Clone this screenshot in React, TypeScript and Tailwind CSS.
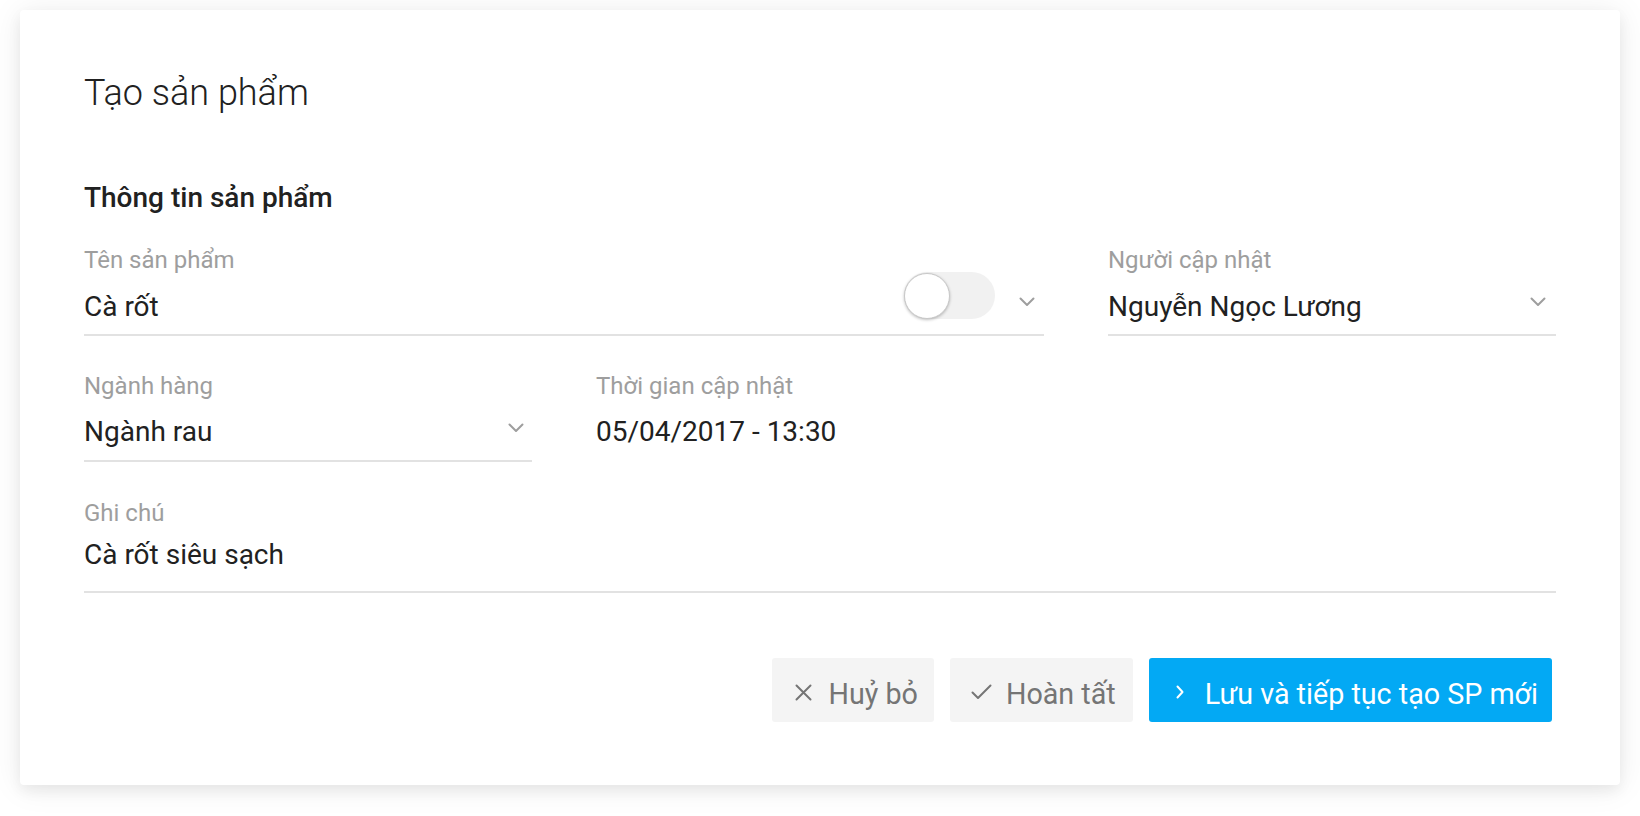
import React from 'react';

const ChevronDown = () => (
  <svg width="16" height="10" viewBox="0 0 16 10" fill="none" className="shrink-0">
    <polyline points="1.5,1.5 8,8 14.5,1.5" stroke="#9e9e9e" strokeWidth="2" strokeLinecap="round" strokeLinejoin="round" />
  </svg>
);

const Toggle = () => (
  <div className="relative w-[91px] h-[47px] rounded-full bg-[#f1f1f1] shrink-0">
    <div className="absolute left-0 top-[1px] w-[46px] h-[46px] rounded-full bg-white border border-[#c8c8c8] shadow-[0_1px_3px_rgba(0,0,0,0.25)]" />
  </div>
);

const Label: React.FC<{ children: React.ReactNode }> = ({ children }) => (
  <div className="text-[24px] leading-[28px] text-[#9e9e9e]">{children}</div>
);

export default function App() {
  return (
    <div className="min-h-screen bg-white pt-[10px] px-[20px] font-['Roboto',sans-serif]">
      <div className="h-[775px] rounded-[4px] bg-white shadow-[0_6px_14px_rgba(0,0,0,0.06),0_2px_32px_rgba(0,0,0,0.08)] px-[64px] pt-[61px]">
        <h1 className="text-[36px] leading-[44px] font-light text-[#212121]">Tạo sản phẩm</h1>

        <h2 className="mt-[66px] text-[28px] leading-[34px] font-medium text-[#212121]">Thông tin sản phẩm</h2>

        <div className="mt-[31px] grid grid-cols-3 gap-x-16 gap-y-[36px]">
          {/* Tên sản phẩm */}
          <div className="col-span-2">
            <Label>Tên sản phẩm</Label>
            <div className="flex items-start pt-[15px] pb-[9px] border-b-2 border-[#e2e2e2]">
              <span className="flex-1 text-[28px] leading-[36px] text-[#212121]">Cà rốt</span>
              <div className="-mt-[17px]">
                <Toggle />
              </div>
              <div className="mt-[8px] ml-[24px] mr-[9px]">
                <ChevronDown />
              </div>
            </div>
          </div>

          {/* Người cập nhật */}
          <div>
            <Label>Người cập nhật</Label>
            <div className="flex items-start pt-[15px] pb-[9px] border-b-2 border-[#e2e2e2]">
              <span className="flex-1 text-[28px] leading-[36px] text-[#212121]">Nguyễn Ngọc Lương</span>
              <div className="mt-[8px] mr-[10px]">
                <ChevronDown />
              </div>
            </div>
          </div>

          {/* Ngành hàng */}
          <div>
            <Label>Ngành hàng</Label>
            <div className="flex items-start pt-[14px] pb-[10px] border-b-2 border-[#e2e2e2]">
              <span className="flex-1 text-[28px] leading-[36px] text-[#212121]">Ngành rau</span>
              <div className="mt-[9px] mr-[8px]">
                <ChevronDown />
              </div>
            </div>
          </div>

          {/* Thời gian cập nhật */}
          <div>
            <Label>Thời gian cập nhật</Label>
            <div className="pt-[14px] text-[28px] leading-[36px] text-[#212121]">05/04/2017 - 13:30</div>
          </div>
          <div />

          {/* Ghi chú */}
          <div className="col-span-3 mt-[1px]">
            <Label>Ghi chú</Label>
            <div className="pt-[10px] pb-[18px] border-b-2 border-[#e2e2e2]">
              <span className="text-[28px] leading-[36px] text-[#212121]">Cà rốt siêu sạch</span>
            </div>
          </div>
        </div>

        <div className="mt-[65px] mr-[4px] flex justify-end gap-4">
          <button className="h-[64px] flex items-center gap-4 pl-[23px] pr-[16px] rounded-[3px] bg-[#f4f4f4] text-[28.7px] text-[#757575]">
            <svg width="17" height="17" viewBox="0 0 17 17" fill="none" className="mt-[4px]">
              <path d="M1.5 1.5L15.5 15.5M15.5 1.5L1.5 15.5" stroke="#757575" strokeWidth="2" strokeLinecap="round" />
            </svg>
            <span className="pt-[9px]">Huỷ bỏ</span>
          </button>
          <button className="h-[64px] flex items-center gap-[14px] pl-[21px] pr-[17px] rounded-[3px] bg-[#f4f4f4] text-[28.7px] text-[#757575]">
            <svg width="21" height="16" viewBox="0 0 21 16" fill="none" className="mt-[4px]">
              <path d="M1.5 8.5L7 14L19.5 1.5" stroke="#757575" strokeWidth="2" strokeLinecap="round" strokeLinejoin="round" />
            </svg>
            <span className="pt-[9px]">Hoàn tất</span>
          </button>
          <button className="h-[64px] flex items-center gap-[21px] pl-[27px] pr-[14px] rounded-[3px] bg-[#03a9f4] text-[28.7px] text-white">
            <svg width="8" height="14" viewBox="0 0 8 14" fill="none" className="mt-[4px]">
              <path d="M1.5 1.5L6.5 7L1.5 12.5" stroke="#ffffff" strokeWidth="2" strokeLinecap="round" strokeLinejoin="round" />
            </svg>
            <span className="pt-[9px]">Lưu và tiếp tục tạo SP mới</span>
          </button>
        </div>
      </div>
    </div>
  );
}
